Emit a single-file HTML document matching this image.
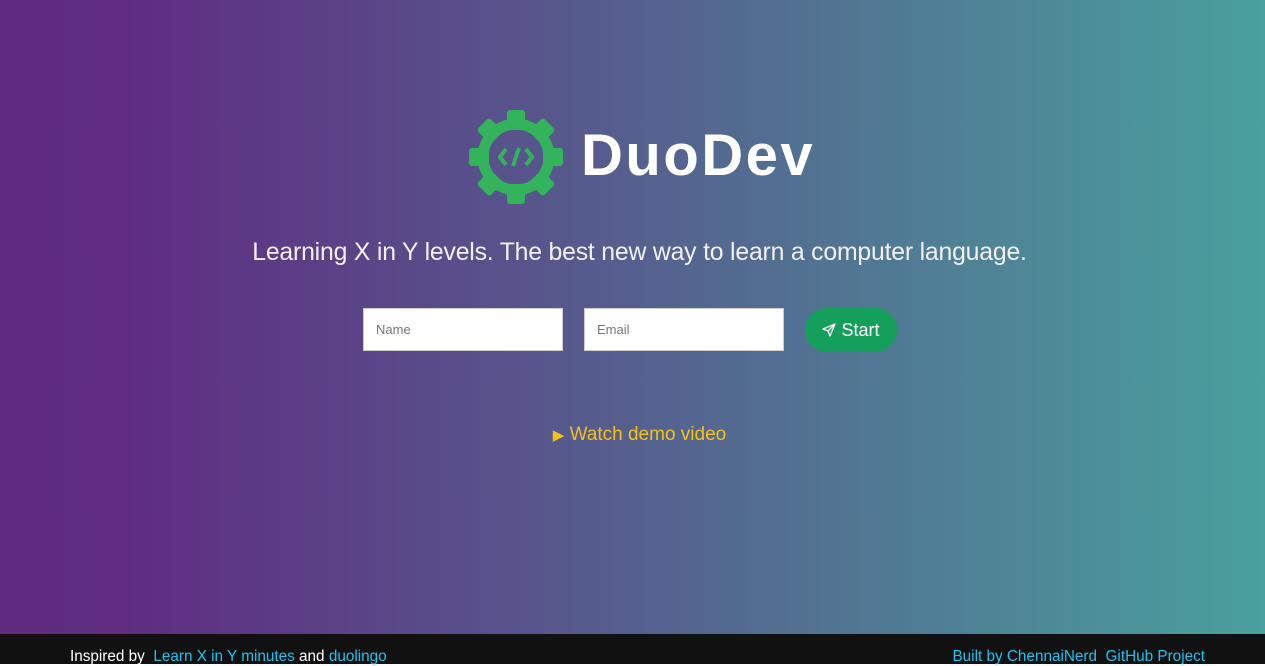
<!DOCTYPE html>
<html><head><meta charset="utf-8"><style>
html,body{margin:0;padding:0;width:1265px;height:664px;overflow:hidden;font-family:"Liberation Sans",sans-serif}
.hero{position:absolute;left:0;top:0;width:1265px;height:634px;background:linear-gradient(to right,#5e2b80 0%,#5f2c82 10%,#49a09d 100%)}
.logo{position:absolute;left:468px;top:109px}
.title{position:absolute;left:581px;top:122px;font-size:58px;font-weight:bold;color:#fff;letter-spacing:2.5px}
.tag{position:absolute;left:7px;width:1265px;top:239px;text-align:center;color:#f4f0f8;font-size:24.8px;letter-spacing:-0.2px}
input{position:absolute;top:308px;width:200px;height:43px;box-sizing:border-box;border:1px solid #ccc;background:#fff;padding:0 12px;font-family:"Liberation Sans",sans-serif;font-size:13px;color:#999;outline:none}
.btn{position:absolute;left:805px;top:308px;width:92px;height:44px;border-radius:22px;background:#14a05a;color:#fff;font-size:18px;line-height:44px;text-align:center}
.watch{position:absolute;left:7px;width:1265px;top:424px;text-align:center;color:#f2c21b;font-size:19px}
.foot{position:absolute;left:0;top:634px;width:1265px;height:30px;background:#111;font-size:15.3px;color:#fff}
.foot a{color:#1ec3f0;text-decoration:none}
</style></head><body>
<div class="hero">
<svg class="logo" width="96" height="96" viewBox="-48 -48 96 96">
<g fill="#33b35c">
<rect x="-9" y="-47" width="18" height="20" rx="3"/>
<rect x="-9" y="-47" width="18" height="20" rx="3" transform="rotate(45)"/>
<rect x="-9" y="-47" width="18" height="20" rx="3" transform="rotate(90)"/>
<rect x="-9" y="-47" width="18" height="20" rx="3" transform="rotate(135)"/>
<rect x="-9" y="-47" width="18" height="20" rx="3" transform="rotate(180)"/>
<rect x="-9" y="-47" width="18" height="20" rx="3" transform="rotate(225)"/>
<rect x="-9" y="-47" width="18" height="20" rx="3" transform="rotate(270)"/>
<rect x="-9" y="-47" width="18" height="20" rx="3" transform="rotate(315)"/>
</g>
<circle r="33" fill="none" stroke="#33b35c" stroke-width="11"/>
<g fill="none" stroke="#33b35c" stroke-width="4">
<path d="M-10,-8 L-16,0 L-10,8"/><path d="M10,-8 L16,0 L10,8"/><path d="M3,-9 L-3,9"/>
</g>
</svg>
<div class="title">DuoDev</div>
<div class="tag">Learning X in Y levels. The best new way to learn a computer language.</div>
<input style="left:363px" placeholder="Name">
<input style="left:584px" placeholder="Email">
<div class="btn"><svg width="14" height="14" viewBox="0 0 14 14" style="vertical-align:-1px;margin-right:5px"><path d="M13,1 L1,6 L6,8 L8,13 Z M6,8 L13,1" fill="none" stroke="#fff" stroke-width="1.3" stroke-linejoin="round"/></svg>Start</div>
<div class="watch"><span style="font-size:15px">&#9654;</span> Watch demo video</div>
</div>
<div class="foot">
<div style="position:absolute;left:70px;top:14px">Inspired by &nbsp;<a>Learn X in Y minutes</a> and <a>duolingo</a></div>
<div style="position:absolute;right:60px;top:14px"><a>Built by ChennaiNerd</a> &nbsp;<a>GitHub Project</a></div>
</div>
</body></html>
